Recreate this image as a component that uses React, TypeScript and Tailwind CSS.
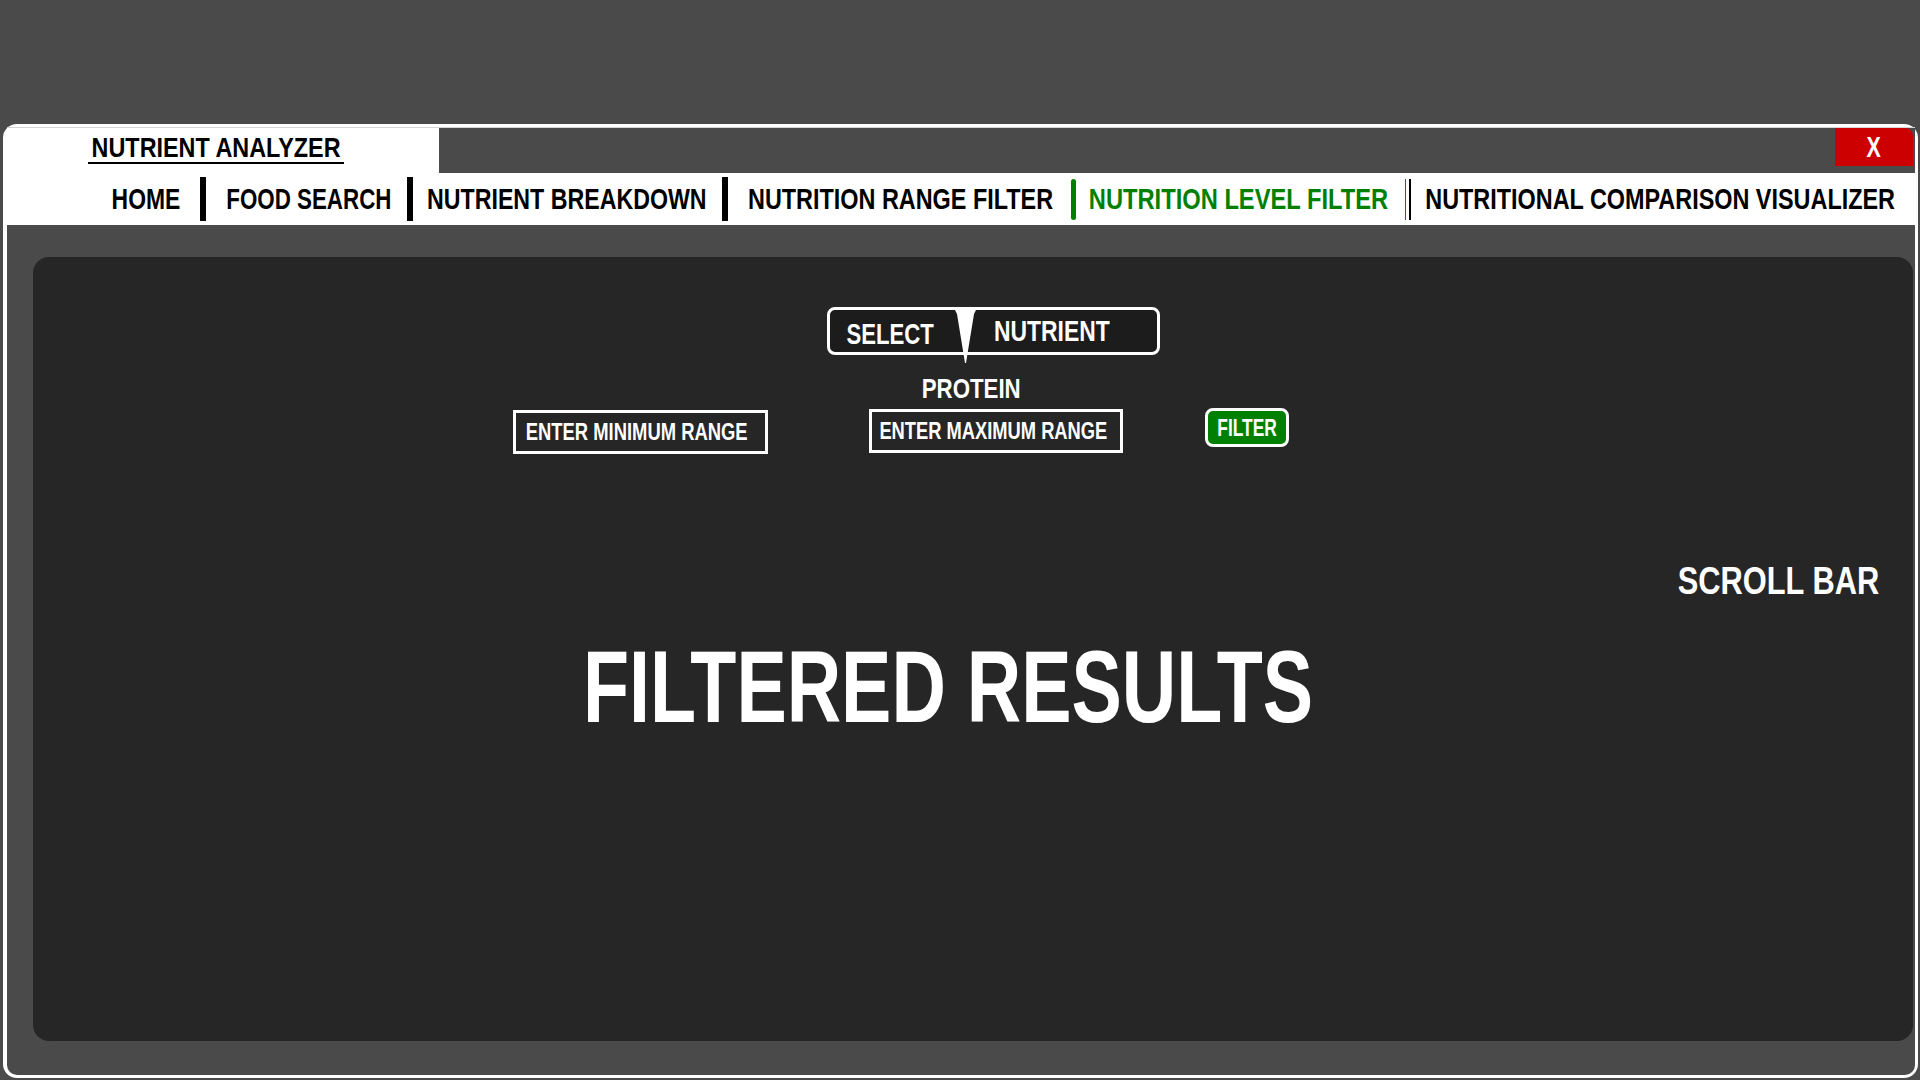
import React from "react";

function Box({ className, textClass, children }: { className: string; textClass: string; children: React.ReactNode }) {
  return (
    <div className={"flex shrink-0 justify-center " + className}>
      <span className={"whitespace-nowrap leading-none " + textClass}>{children}</span>
    </div>
  );
}

export default function App() {
  return (
    <div className="w-[1920px] h-[1080px] overflow-hidden bg-[#4a4a4a] font-['Liberation_Sans',Arial,sans-serif] font-bold">
      <div className="ml-[3px] mt-[124px] flex h-[954px] w-[1915px] flex-col rounded-[14px] bg-white pt-[3px] pb-[3px] pl-[4px] pr-[3px]">
        <div className="h-px bg-[#d4d4d4]" />
        {/* title row */}
        <div className="flex h-[45px]">
          <div className="w-[432px] bg-white pl-[81px] pt-[6px]">
            <div className="w-[256px] border-b-2 border-black">
              <Box className="w-[256px]" textClass="text-[28px] text-black scale-x-[0.835]">NUTRIENT ANALYZER</Box>
            </div>
          </div>
          <div className="flex flex-1 justify-end bg-[#4a4a4a] pr-[2px]">
            <div className="flex h-[38px] w-[78px] items-center justify-center rounded-tr-[8px] bg-[#cc0000]">
              <span className="leading-none text-[29px] text-white scale-x-[0.74]">X</span>
            </div>
          </div>
        </div>
        {/* nav row */}
        <div className="flex h-[52px] items-center bg-white pl-[105px] text-black">
          <Box className="w-[68px]" textClass="text-[30px] scale-x-[0.764]">HOME</Box>
          <div className="ml-[20px] h-[44px] w-[6px] bg-black" />
          <Box className="ml-[22px] w-[161px]" textClass="text-[30px] scale-x-[0.745]">FOOD SEARCH</Box>
          <div className="ml-[18px] h-[44px] w-[6px] bg-black" />
          <Box className="ml-[15px] w-[277px]" textClass="text-[30px] scale-x-[0.773]">NUTRIENT BREAKDOWN</Box>
          <div className="ml-[17px] h-[44px] w-[6px] bg-black" />
          <Box className="ml-[21px] w-[304px]" textClass="text-[30px] scale-x-[0.78]">NUTRITION RANGE FILTER</Box>
          <div className="ml-[18px] h-[41px] w-[5px] rounded-full bg-[#008000]" />
          <Box className="ml-[13px] w-[298px]" textClass="text-[30px] text-[#008000] scale-x-[0.79]">NUTRITION LEVEL FILTER</Box>
          <div className="ml-[18px] flex h-[41px] gap-[3px]">
            <div className="w-px bg-[#008000]" />
            <div className="w-[2px] bg-black" />
          </div>
          <Box className="ml-[15px] w-[469px]" textClass="text-[30px] scale-x-[0.78]">NUTRITIONAL COMPARISON VISUALIZER</Box>
        </div>
        {/* body */}
        <div className="flex-1 rounded-b-[10px] bg-[#4a4a4a] pl-[26px] pr-[2px] pt-[32px] pb-[34px]">
          <div className="flex h-full flex-col rounded-[16px] bg-[#272627] text-white">
            {/* select */}
            <div className="ml-[794px] mt-[50px] flex h-[48px] w-[333px] items-center rounded-[8px] border-[3px] border-white bg-[#1c1c1c]">
              <Box className="ml-[16px] mt-[6px] w-[88px]" textClass="text-[30px] scale-x-[0.738]">SELECT</Box>
              <div className="relative ml-[21px] h-full w-[21px] self-stretch">
                <svg className="absolute left-0 top-0 overflow-visible" width="21" height="53" viewBox="0 0 21 53">
                  <path d="M0 0 L21 0 L19 4 L11 53 L10 53 L2 4 Z" fill="#ffffff" />
                </svg>
              </div>
              <Box className="ml-[18px] w-[116px]" textClass="text-[30px] scale-x-[0.763]">NUTRIENT</Box>
            </div>
            {/* protein */}
            <Box className="ml-[889px] mt-[20px] w-[99px]" textClass="text-[28px] scale-x-[0.795]">PROTEIN</Box>
            {/* inputs row */}
            <div className="mt-[5px] flex items-start">
              <div className="ml-[480px] mt-[2px] flex h-[44px] w-[255px] items-center border-[3px] border-white pl-[10px]">
                <Box className="w-[222px]" textClass="text-[24px] scale-x-[0.767]">ENTER MINIMUM RANGE</Box>
              </div>
              <div className="ml-[101px] mt-[1px] flex h-[44px] w-[254px] items-center border-[3px] border-white pl-[7px]">
                <Box className="w-[228px]" textClass="text-[24px] scale-x-[0.763]">ENTER MAXIMUM RANGE</Box>
              </div>
              <div className="ml-[82px] flex h-[39px] w-[84px] items-center justify-center rounded-[8px] border-[3px] border-white bg-[#008000]">
                <Box className="w-[61px]" textClass="text-[24px] scale-x-[0.726]">FILTER</Box>
              </div>
            </div>
            {/* scroll bar */}
            <div className="mt-[107px] flex justify-end pr-[35px]">
              <Box className="w-[200px]" textClass="text-[39px] scale-x-[0.79]">SCROLL BAR</Box>
            </div>
            {/* filtered results */}
            <Box className="ml-[551px] mt-[36px] w-[728px]" textClass="text-[102px] scale-x-[0.739]">FILTERED RESULTS</Box>
          </div>
        </div>
      </div>
    </div>
  );
}
